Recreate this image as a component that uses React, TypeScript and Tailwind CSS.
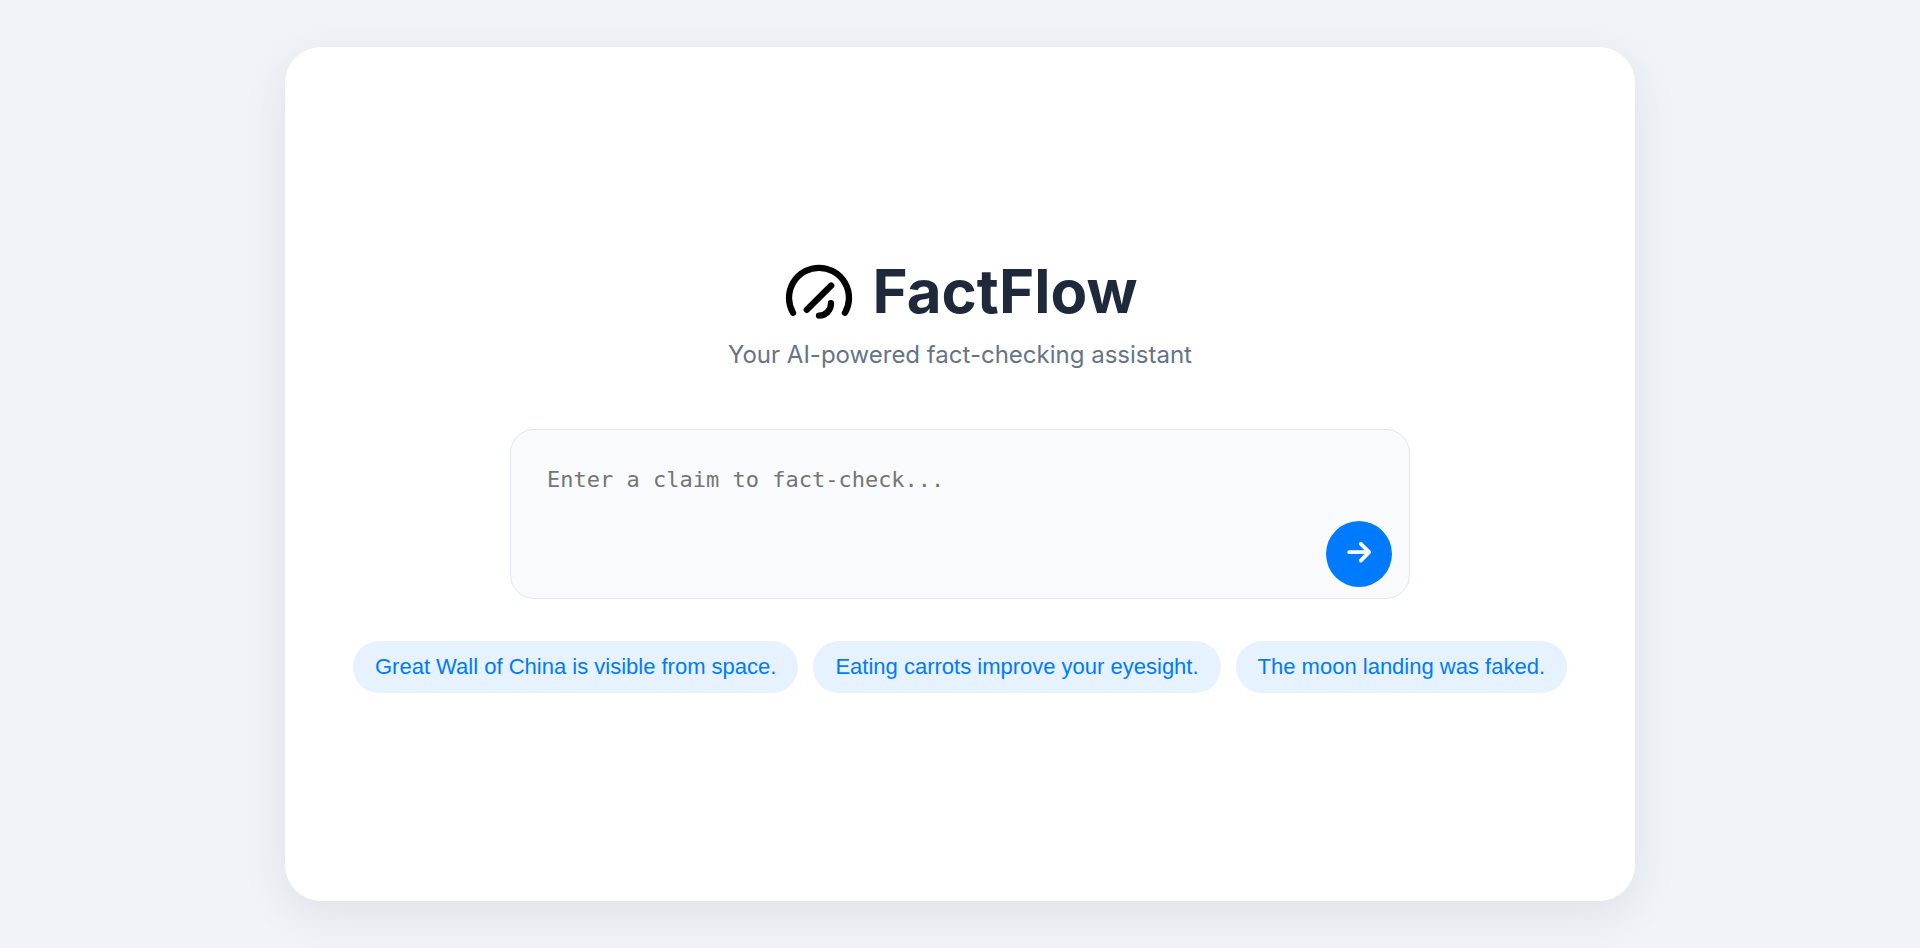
import { useState } from "react";

const suggestions = [
  "Great Wall of China is visible from space.",
  "Eating carrots improve your eyesight.",
  "The moon landing was faked.",
];

function Logo() {
  return (
    <svg
      viewBox="0 0 72 72"
      className="size-18 shrink-0 text-black"
      fill="none"
      stroke="currentColor"
      strokeWidth="6.3"
      strokeLinecap="round"
      aria-hidden="true"
    >
      <path d="M10 57.8A30 30 0 1 1 62 57.8" />
      <path d="M23.8 54.8L48.2 30.6" />
      <path d="M48 48.2A12 12 0 0 1 36 60.6" />
    </svg>
  );
}

function ArrowIcon() {
  return (
    <svg
      viewBox="0 0 32 32"
      className="size-8"
      fill="none"
      stroke="currentColor"
      strokeWidth="3.8"
      strokeLinecap="round"
      strokeLinejoin="round"
      aria-hidden="true"
    >
      <path d="M6.2 14.2H26M17.8 5.8L26.1 14.2L17.8 22.6" />
    </svg>
  );
}

export default function App() {
  const [claim, setClaim] = useState("");

  return (
    <div className="flex min-h-screen items-center justify-center bg-[#f0f4f8] font-['Inter',sans-serif]">
      <main className="flex min-h-[90vh] w-full max-w-[1350px] flex-col items-center justify-center rounded-[36px] bg-white p-12 shadow-[0_12px_48px_rgba(0,0,0,0.08)]">
        <header className="flex flex-col items-center">
          <div className="flex items-center gap-[18px]">
            <Logo />
            <h1 className="text-[60px] leading-[72px] font-bold text-[#1e293b]">FactFlow</h1>
          </div>
          <p className="mt-3 text-2xl text-[#64748b]">Your AI-powered fact-checking assistant</p>
        </header>

        <form
          className="relative mt-[58px] w-full max-w-[900px]"
          onSubmit={(event) => event.preventDefault()}
        >
          <textarea
            aria-label="Claim"
            placeholder="Enter a claim to fact-check..."
            value={claim}
            onChange={(event) => setClaim(event.target.value)}
            className="block h-[170px] w-full resize-none rounded-3xl border border-[#e2e8f0] bg-[#f8fafc] p-9 font-['DejaVu_Sans_Mono',monospace] text-[22px] leading-7 text-[#1e293b] outline-none placeholder:text-[#757575]"
          />
          <button
            type="submit"
            aria-label="Check claim"
            className="absolute right-[18px] bottom-3 flex size-[66px] items-center justify-center rounded-full bg-[#007bff] text-white"
          >
            <ArrowIcon />
          </button>
        </form>

        <div className="mt-[42px] flex flex-wrap justify-center gap-[15px]">
          {suggestions.map((text) => (
            <button
              key={text}
              type="button"
              onClick={() => setClaim(text)}
              className="rounded-full bg-[#e6f2ff] px-[22px] py-3 font-['Liberation_Sans',sans-serif] text-[22px] leading-7 text-[#007bff]"
            >
              {text}
            </button>
          ))}
        </div>
      </main>
    </div>
  );
}
